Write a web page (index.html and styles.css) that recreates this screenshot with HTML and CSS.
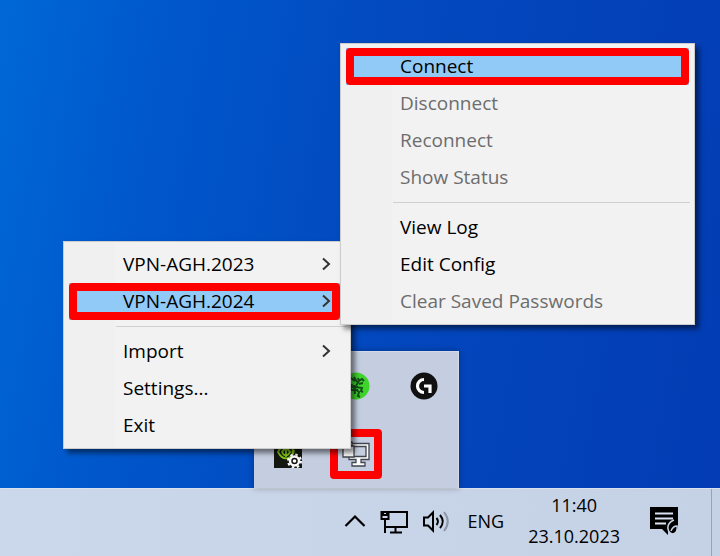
FILE: index.html
```html
<!DOCTYPE html>
<html lang="en">
  <head>
    <meta charset="UTF-8" />
    <meta name="viewport" content="width=device-width, initial-scale=1" />
    <title>VPN tray menu</title>
    <link rel="stylesheet" href="styles.css">
  </head>
  <body>
    <main class="desktop">
      <div class="tray-flyout" aria-label="Hidden icons">
        <button class="tray-icon" aria-label="Audio"></button>
        <button class="tray-icon" aria-label="Razer">
          <svg width="28" height="28" viewBox="0 0 28 28">
            <circle cx="14" cy="14" r="13.5" fill="#3fd42c" />
            <path d="M9 6l4 3M12 5l3 5M14 14l3-5-1-3M15 10l5-3 2 2M17 12l4-1M14 15l6 1-1 3 2 1M13 17l4 3-1 4 2 1M10 12l-2 7M12 13l1 9M8 15h8M9 18h7" fill="none" stroke="#14521a" stroke-width="2" />
          </svg>
        </button>
        <button class="tray-icon" aria-label="Logitech G HUB">
          <svg width="28" height="28" viewBox="0 0 28 28">
            <circle cx="14" cy="14" r="13.5" fill="#111" />
            <path d="M14 7.500A6.500 6.500 0 0 0 14 20.500" fill="none" stroke="#fff" stroke-width="3.200" />
            <path d="M14 14h6v7" fill="none" stroke="#fff" stroke-width="3.200" />
          </svg>
        </button>
        <button class="tray-icon" aria-label="NVIDIA">
          <svg width="28" height="28" viewBox="0 0 28 28">
            <path d="M0 0h28v28H0z" fill="#14170f" />
            <path d="M4 12c3-7 12-8 16-1-2 7-10 12-16 1zm4 0c2-4 6-4 8 0-2 4-6 5-8 0zM12 8v9M19 8l-1 9" fill="none" stroke="#86c715" stroke-width="1.800" />
            <circle cx="20.500" cy="21" r="4.500" fill="#111" stroke="#fff" stroke-width="2.500" />
            <circle cx="20.500" cy="21" r="6.500" fill="none" stroke="#fff" stroke-width="2" stroke-dasharray="2.500 2.600" />
            <circle cx="20.500" cy="21" r="1.800" fill="#fff" />
          </svg>
        </button>
        <button class="tray-icon marked" aria-label="OpenVPN">
          <svg width="28" height="28" viewBox="0 0 28 28">
            <g fill="#fff" stroke="#42464d" stroke-width="1.300">
              <path d="M7 3.500h20v16h-8v3h4v3.500H10v-3.500h4v-3H7z" />
              <path d="M10 6.500h14v10H10z" fill="#c5cfe0" />
              <path d="M1 6h11v11H1zM3 2h7v4H3z" />
            </g>
          </svg>
        </button>
      </div>

      <ul class="menu menu-main">
        <li>
          <button class="menu-item">VPN-AGH.2023
            <svg class="arrow" width="10" height="16" viewBox="0 0 10 16"><path d="M2 2.500l6 5.500-6 5.500" /></svg>
          </button>
        </li>
        <li>
          <button class="menu-item selected marked">VPN-AGH.2024
            <svg class="arrow" width="10" height="16" viewBox="0 0 10 16"><path d="M2 2.500l6 5.500-6 5.500" /></svg>
          </button>
        </li>
        <li class="separator" role="separator"></li>
        <li>
          <button class="menu-item">Import
            <svg class="arrow" width="10" height="16" viewBox="0 0 10 16"><path d="M2 2.500l6 5.500-6 5.500" /></svg>
          </button>
        </li>
        <li><button class="menu-item">Settings...</button></li>
        <li><button class="menu-item">Exit</button></li>
      </ul>

      <ul class="menu menu-sub">
        <li><button class="menu-item selected marked">Connect</button></li>
        <li><button class="menu-item" disabled>Disconnect</button></li>
        <li><button class="menu-item" disabled>Reconnect</button></li>
        <li><button class="menu-item" disabled>Show Status</button></li>
        <li class="separator" role="separator"></li>
        <li><button class="menu-item">View Log</button></li>
        <li><button class="menu-item">Edit Config</button></li>
        <li><button class="menu-item" disabled>Clear Saved Passwords</button></li>
      </ul>
    </main>

    <footer class="taskbar">
      <button class="task-btn" aria-label="Show hidden icons">
        <svg width="22" height="28" viewBox="0 0 22 28"><path d="M1.500 19L11 9.500l9.500 9.500" fill="none" stroke="#000" stroke-width="2.200" /></svg>
      </button>
      <button class="task-btn" aria-label="Network">
        <svg width="28" height="28" viewBox="0 0 28 28" fill="none" stroke="#000" stroke-width="2">
          <path d="M8 5h19v15H5M15.500 20v5M10 25.500h12" />
          <path d="M1.500 5h7v7h-7zM5 12v14M3 5v3h4V5" />
        </svg>
      </button>
      <button class="task-btn" aria-label="Volume">
        <svg width="28" height="28" viewBox="0 0 28 28" fill="none" stroke="#000" stroke-width="2">
          <path d="M2 10.500h4l5-5v18l-5-5H2z" />
          <path d="M14.500 11q3 3.500 0 7M18 8q5.500 6.500 0 13" />
          <path d="M22 5q7.500 9.500 0 19" stroke="#8d96a5" />
        </svg>
      </button>
      <button class="task-btn language">ENG</button>
      <button class="task-btn clock"><span>11:40</span><span>23.10.2023</span></button>
      <button class="task-btn notifications" aria-label="Notifications">
        <svg width="28" height="28" viewBox="0 0 28 28">
          <path d="M0 0h28v22H18v6l-6-6H0z" fill="#000" />
          <path d="M5 6.500h18M5 11.500h18M5 16.500h11" stroke="#dbe3f0" stroke-width="1.800" />
          <path d="M24 13q-7 3-6 9 1 5 5 5 5-1 4-8-4 0-6 5" fill="#000" stroke="#c8d3e5" stroke-width="1.500" />
        </svg>
      </button>
      <button class="show-desktop" aria-label="Show desktop"></button>
    </footer>
  </body>
</html>
```

FILE: styles.css
```css
* {
  margin: 0;
  padding: 0;
  box-sizing: border-box;
}
body {
  min-height: 100vh;
  display: flex;
  flex-direction: column;
  font-family: "Open Sans", "Noto Sans", sans-serif;
  font-size: 19px;
  color: #000;
  overflow: hidden;
}
button {
  font: inherit;
  color: inherit;
  background: none;
  border: none;
}
svg {
  display: block;
  flex: none;
}

.desktop {
  flex: 1;
  position: relative;
  background: linear-gradient(100deg, #0068d6 0%, #0057cb 22%, #0349bf 50%, #033cb4 100%);
}

/* context menus */
.menu {
  position: absolute;
  list-style: none;
  padding: 4px 0;
  border: 1px solid #ccc;
  background: linear-gradient(90deg, #f0f0f0 51px, #f2f2f2 51px);
  box-shadow: 4px 4px 5px rgba(0, 0, 0, 0.5);
}
.menu-main {
  width: 288px;
  right: 369px;
  bottom: 39px;
}
.menu-sub {
  width: 355px;
  right: 25px;
  bottom: 163px;
}
.menu li {
  display: flex;
  padding: 0 5px;
}
.menu-main li {
  padding: 0 10px 0 5px;
}
.menu-item {
  flex: 1;
  display: flex;
  align-items: center;
  justify-content: space-between;
  height: 37px;
  padding: 0 9px 2px 54px;
  text-align: left;
  position: relative;
}
.menu-item:disabled {
  color: #6d6d6d;
}
.selected {
  background: #91c9f7;
}
.arrow {
  fill: none;
  stroke: #333;
  stroke-width: 2;
}
.menu .separator {
  height: 13px;
  padding: 6px 4px 6px 52px;
}
.separator::before {
  content: "";
  flex: 1;
  background: #d0d0d0;
}

/* red frame around the thing to click */
.marked {
  position: relative;
}
.marked::after {
  content: "";
  position: absolute;
  inset: 0;
  border: 8px solid #f00;
  border-radius: 4px;
}

/* hidden icons */
.tray-flyout {
  position: absolute;
  right: 261px;
  bottom: 0;
  display: grid;
  grid-template-columns: repeat(3, 68px);
  grid-auto-rows: 68px;
  place-items: center;
  background: #c4cee0;
  border: solid #d3dbe8;
  border-width: 1px 1px 0 0;
  box-shadow: 0 0 6px rgba(0, 0, 0, 0.3);
}
.tray-icon {
  width: 52px;
  height: 50px;
  display: grid;
  place-items: center;
}

/* taskbar */
.taskbar {
  display: flex;
  justify-content: flex-end;
  align-items: center;
  height: 68px;
  border-top: 1px solid #d9e1ee;
  background: linear-gradient(90deg, #cbd7ea, #c5d1e4);
}
.task-btn {
  margin-right: 14px;
  padding-bottom: 3px;
}
.language {
  margin: 0 24px 0 4px;
  font-size: 18px;
}
.clock {
  display: flex;
  flex-direction: column;
  align-items: center;
  margin-right: 30px;
  font-size: 18px;
  line-height: 31px;
}
.notifications {
  margin-right: 33px;
}
.show-desktop {
  width: 9px;
  height: 100%;
  border-left: 1px solid #98a3b5;
}
```
